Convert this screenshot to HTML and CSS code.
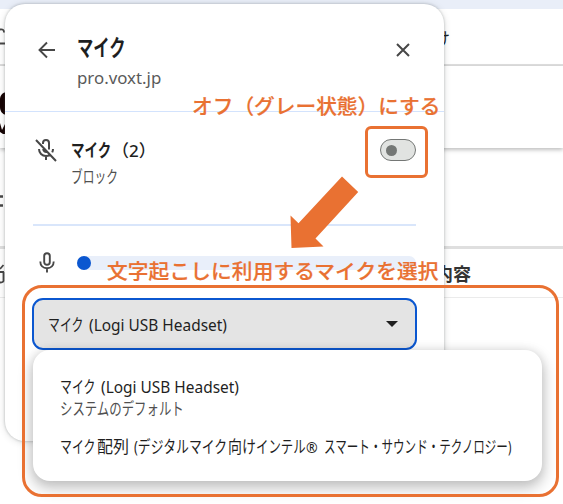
FILE: index.html
```html
<!DOCTYPE html>
<html lang="ja">
<head>
<meta charset="utf-8">
<title>マイク</title>
<link rel="stylesheet" href="styles.css">
</head>
<body>
<div class="page">
  <div class="toolbar"></div>
  <div class="row nav"><svg class="edge ring" viewBox="0 0 6 18"><path d="M0 1.500C3 1 4 2 4 4.500M0 15.500H6"/></svg><span class="nav-tail">け</span></div>
  <div class="row brand"><svg class="edge logo" viewBox="0 0 6 44"><path d="M6 0C2 1 0 4 0 7v8c0 4 2 7 6 8zM0 31l2 7 3-6v10H3L0 40z"/></svg></div>
  <div class="row blank"><svg class="edge dots" viewBox="0 0 3 12"><path d="M0 1.500H3M0 10.500H3"/></svg></div>
  <div class="row head"><svg class="edge kanji" viewBox="0 0 5 20"><path d="M0 5 3.500 1M0 8H4M3.500 8V17C3 18.500 1.500 18.500 0 18.500"/></svg><span class="head-label">内容</span></div>
</div>

<section class="popup">
  <header class="popup-head">
    <svg class="back" viewBox="0 0 18 18"><path d="M17 9H2M9 1.500 1.500 9 9 16.500"/></svg>
    <div class="titles">
      <h1><span class="t title">マイク</span></h1>
      <p><span class="t host">pro.voxt.jp</span></p>
    </div>
    <svg class="close" viewBox="0 0 14 14"><path d="M1 1 13 13M13 1 1 13"/></svg>
  </header>
  <div class="permission">
    <svg class="mic-off" viewBox="0 0 24 24"><path d="M9 6V5a3 3 0 0 1 6 0v6.500M9.200 9.500V11a3 3 0 0 0 3.800 2.800M5 11c0 4 3 7 7 7 1.500 0 2.800-.4 4-1.100M19 11c0 1.300-.3 2.400-.8 3.400M12 18v4M2 2 22 23"/></svg>
    <div class="labels">
      <div class="label"><span class="t perm">マイク</span><span class="t count">（2）</span></div>
      <div class="state"><span class="t block">ブロック</span></div>
    </div>
    <div class="toggle"><i></i></div>
  </div>
  <div class="level">
    <svg class="mic" viewBox="0 0 16 21"><path d="M5.200 4a2.800 2.800 0 0 1 5.600 0v6a2.800 2.800 0 0 1-5.600 0zM1.300 9.500c0 4 2.700 6.700 6.700 6.700s6.700-2.700 6.700-6.700M8 16.200V20.500"/></svg>
    <div class="meter"><i></i></div>
  </div>
  <div class="select">
    <span class="option"><span class="t mic-word">マイク</span><span class="t device">(Logi USB Headset)</span></span>
    <i class="caret"></i>
  </div>
</section>

<div class="menu">
  <div class="item"><span class="t mic-word">マイク</span><span class="t device">(Logi USB Headset)</span></div>
  <div class="item sub"><span class="t default">システムのデフォルト</span></div>
  <div class="item last"><span class="t mic-word">マイク</span><span class="t array">配列</span><span class="t k1">(デジタルマイク</span><span class="t k2">向け</span><span class="t k3">インテル</span><span class="t reg">®</span><span class="t k4">スマート・サウンド・テクノロジー)</span></div>
</div>

<div class="frame toggle-frame"></div>
<div class="frame menu-frame"></div>
<svg class="arrow" viewBox="0 0 70 73"><path d="M53 .5 69.200 16 26.500 62.500 34.500 70.500 2.500 72 1.500 39.500 9.500 47.200z"/></svg>
<div class="note note-off">オフ（グレー状態）にする</div>
<div class="note note-pick">文字起こしに利用するマイクを選択</div>
</body>
</html>
```

FILE: styles.css
```css
* { box-sizing: border-box; }
body {
  margin: 0;
  width: 563px;
  height: 504px;
  overflow: hidden;
  position: relative;
  background: #fff;
  color: #1f1f1f;
  font-family: "Noto Sans", "Noto Sans CJK JP", sans-serif;
}
h1, p { margin: 0; font-weight: 400; }
svg { fill: none; stroke: #474747; flex: none; }

/* page behind the popup */
.page { height: 504px; overflow: hidden; }
.toolbar { height: 9px; background: #e9eef8; }
.row { position: relative; }
.nav { height: 57px; border-bottom: 2px solid #dedede; }
.brand { height: 82px; box-shadow: 0 2px 4px rgba(0,0,0,.25); }
.blank { height: 101px; border-bottom: 3px solid #dfdfdf; }
.head { height: 49px; border-bottom: 1px solid #ebebeb; }
.edge { position: absolute; left: 0; stroke-width: 1.800; }
.ring { top: 19px; width: 6px; height: 18px; }
.logo { top: 26px; width: 6px; height: 44px; fill: #170505; stroke: none; }
.dots { top: 47px; width: 3px; height: 12px; stroke-width: 2.500; }
.kanji { top: 15px; width: 5px; height: 20px; }
.nav-tail { position: absolute; left: 433px; top: 16px; font-size: 17px; }
.head-label { position: absolute; left: 435px; top: 12px; font-size: 18px; line-height: 26px; font-weight: 700; color: #333; }

/* text runs with condensed kana */
.t { display: inline-block; white-space: nowrap; transform-origin: 0 50%; }

.popup {
  position: absolute;
  left: 5px; top: 4px;
  width: 439px; height: 437px;
  border-radius: 20px;
  background: #fff;
  box-shadow: 0 0 2px 1px rgba(80,90,90,.18), 0 1px 7px 1px rgba(0,0,0,.1);
}
.popup-head { display: flex; height: 108px; padding: 30px 34px 0 33px; border-bottom: 1px solid #d3e3fd; }
.back { width: 18px; height: 18px; margin-top: 7px; stroke-width: 1.900; }
.titles { flex: 1; padding-left: 21px; }
.titles h1 { height: 29px; line-height: 27px; font-size: 23px; }
.titles p { height: 28px; line-height: 29px; font-size: 17px; color: #5a5a5a; }
.close { width: 14px; height: 14px; margin-top: 9px; stroke-width: 2; }
.title { font-weight: 700; transform: scaleX(.71); }
.host { transform: scaleX(.99); }
.permission { display: flex; height: 114px; margin: 0 28px; padding: 24px 0 0 1px; border-bottom: 2px solid #d9e6fb; }
.mic-off { width: 24px; height: 24px; margin-top: 2px; stroke-width: 2; }
.labels { flex: 1; padding-left: 13px; }
.label { height: 28px; line-height: 28px; font-size: 17px; font-weight: 500; white-space: nowrap; }
.perm { width: 41px; font-size: 18px; font-weight: 700; transform: scaleX(.75); }
.state { height: 24px; line-height: 25px; font-size: 17px; color: #505050; }
.block { transform: scaleX(.69); }
.toggle { width: 36px; height: 22px; margin: 3px 0 0; border: 1px solid #747775; border-radius: 11px; background: #e1e3e1; padding: 5px; }
.toggle i { display: block; width: 11px; height: 11px; border-radius: 50%; background: #747775; }
.level { display: flex; align-items: center; height: 73px; padding: 0 28px 0 34px; }
.mic { width: 16px; height: 21px; stroke-width: 1.900; }
.meter { width: 339px; height: 14px; margin-left: 22px; border-radius: 7px; background: #e9effa; }
.meter i { display: block; width: 14px; height: 14px; border-radius: 50%; background: #0b57d0; }
.select { display: flex; align-items: center; justify-content: space-between; width: 385px; height: 52px; margin: -1px 0 0 27px; padding: 0 17px 0 14px; border: 2px solid #0b57d0; border-radius: 11px; background: #e4e4e4; font-size: 17px; }
.option { height: 26px; line-height: 27px; }
.caret { border: 6px solid transparent; border-top-color: #1f1f1f; border-bottom: 0; }
.mic-word { width: 37px; transform: scaleX(.7); }
.device { margin-left: 4px; font-size: 16px; transform: scaleX(.965); }

.menu {
  position: absolute;
  left: 33px; top: 350px;
  width: 509px; height: 131px;
  padding: 24px 0 0 27px;
  border-radius: 17px;
  background: #fff;
  font-size: 17px;
  box-shadow: 0 6px 14px 2px rgba(0,0,0,.22), 0 0 10px rgba(0,0,0,.08);
}
.item { height: 24px; line-height: 25px; white-space: nowrap; }
.sub { height: 20px; line-height: 21px; color: #505050; }
.last { margin-top: 16px; height: 26px; line-height: 26px; }
.default { transform: scaleX(.73); }
.array { width: 37px; transform: scaleX(.94); }
.k1 { width: 94px; transform: scaleX(.755); }
.k2 { width: 28px; transform: scaleX(.82); }
.k3 { width: 50px; transform: scaleX(.73); }
.reg { width: 18px; font-size: 14px; }
.k4 { width: 188px; transform: scaleX(.68); }

/* annotations */
.frame { position: absolute; border: 3px solid #e97132; }
.toggle-frame { left: 365px; top: 126px; width: 63px; height: 52px; border-radius: 6px; }
.menu-frame { left: 22px; top: 285px; width: 537px; height: 212px; border-radius: 20px; }
.arrow { position: absolute; left: 289px; top: 176px; width: 70px; height: 73px; fill: #e97132; stroke: none; }
.note { position: absolute; font-family: "Noto Sans CJK JP", sans-serif; font-size: 20.700px; line-height: 30px; font-weight: 500; color: #e97132; -webkit-text-stroke: .2px #e97132; white-space: nowrap; }
.note-off { left: 192px; top: 90px; }
.note-pick { left: 107px; top: 255px; letter-spacing: .12px; }
```
